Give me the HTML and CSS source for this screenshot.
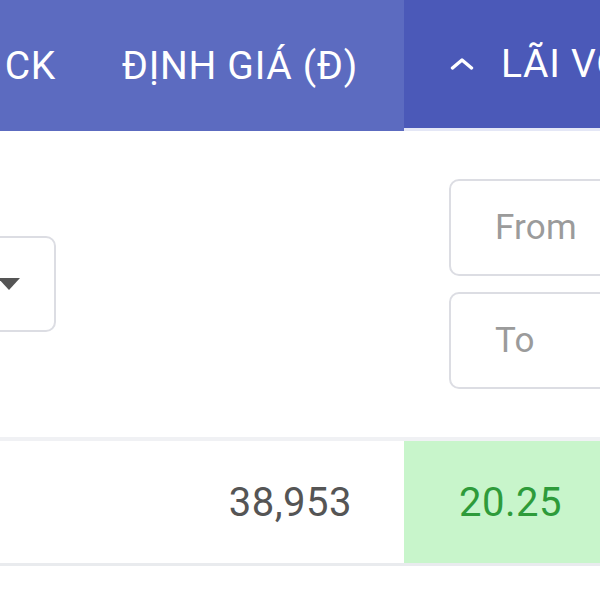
FILE: index.html
```html
<!DOCTYPE html>
<html lang="vi">
<head>
    <meta charset="UTF-8">
    <meta name="viewport" content="width=device-width, initial-scale=1.0">
    <title>Bảng cổ phiếu</title>
    <link rel="stylesheet" href="styles.css">
</head>
<body>
    <div class="stock-table">
        <!-- Header -->
        <div class="head-cell col-code">MÃ CK</div>
        <div class="head-cell col-price">ĐỊNH GIÁ (Đ)</div>
        <div class="head-cell col-gain sorted">
            <svg class="sort-icon" viewBox="0 0 24 12" width="24" height="12">
                <path d="M2.5 10 L12 2 L21.5 10" fill="none" stroke="#fff" stroke-width="3.4" stroke-linecap="round" stroke-linejoin="round"/>
            </svg>
            <span>LÃI VỐN (%)</span>
        </div>

        <!-- Filters -->
        <div class="filter-cell col-code">
            <div class="select-box">
                <span class="select-arrow"></span>
            </div>
        </div>
        <div class="filter-cell col-price"></div>
        <div class="filter-cell col-gain">
            <div class="range-inputs">
                <input class="range-input" type="text" placeholder="From">
                <input class="range-input" type="text" placeholder="To">
            </div>
        </div>

        <!-- Data -->
        <div class="data-cell col-code">VNM</div>
        <div class="data-cell col-price num">38,953</div>
        <div class="data-cell col-gain positive">20.25</div>
    </div>
</body>
</html>
```

FILE: styles.css
```css
/* Base */
body, html {
    margin: 0;
    padding: 0;
    overflow: hidden;
    background-color: #fff;
    font-family: 'Roboto', 'Noto Sans', sans-serif;
}

/* Table grid - first column scrolled off to the left */
.stock-table {
    display: grid;
    grid-template-columns: 300px 304px 400px;
    margin-left: -200px;
    width: 1004px;
}

/* Header */
.head-cell {
    height: 131px;
    display: flex;
    align-items: center;
    background-color: #5c6bc0;
    color: #fff;
    font-size: 39px;
    letter-spacing: 0.7px;
    white-space: nowrap;
    box-sizing: border-box;
}

.head-cell.col-code {
    justify-content: flex-end;
    padding-right: 44px;
}

.head-cell.col-price {
    justify-content: flex-end;
    padding-right: 46px;
}

.head-cell.sorted {
    background-color: #4b59b8;
    padding-left: 46px;
    border-bottom: 3px solid #e4e7f6;
}

.sort-icon {
    margin-right: 27px;
}

/* Filter row */
.filter-cell {
    height: 306px;
    display: flex;
    align-items: center;
    box-sizing: border-box;
}

.filter-cell.col-code {
    justify-content: flex-end;
    padding-right: 44px;
}

.select-box {
    width: 150px;
    height: 96px;
    box-sizing: border-box;
    border: 2px solid #dcdde3;
    border-radius: 10px;
    display: flex;
    align-items: center;
    justify-content: flex-end;
    padding-right: 34px;
}

.select-arrow {
    width: 0;
    height: 0;
    border-left: 11px solid transparent;
    border-right: 11px solid transparent;
    border-top: 12px solid #555;
}

.filter-cell.col-gain {
    padding-left: 45px;
}

.range-inputs {
    display: flex;
    flex-direction: column;
    gap: 16px;
}

.range-input {
    width: 300px;
    height: 97px;
    box-sizing: border-box;
    border: 2px solid #dcdde3;
    border-radius: 10px;
    padding: 0 0 0 44px;
    font-family: inherit;
    font-size: 35px;
    letter-spacing: 0.2px;
    color: #333;
    outline: none;
}

.range-input::placeholder {
    color: #9b9b9b;
}

/* Data row */
.data-cell {
    height: 122px;
    display: flex;
    align-items: center;
    border-top: 4px solid #f0f1f4;
    border-bottom: 3px solid #e9ebee;
    font-size: 40px;
    letter-spacing: 0.5px;
    color: #555;
    white-space: nowrap;
}

.data-cell.num {
    justify-content: flex-end;
    padding-right: 52px;
}

.data-cell.positive {
    background-color: #c8f5cb;
    color: #2e9b3a;
    padding-left: 55px;
}
```
